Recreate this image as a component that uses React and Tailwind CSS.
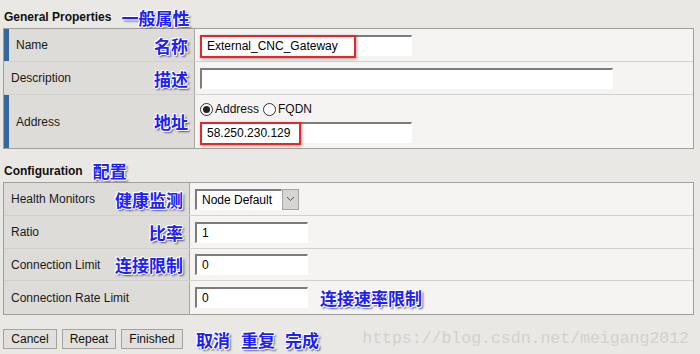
import React from 'react';

const cn = "font-['Noto_Sans_CJK_SC',sans-serif] font-bold text-[17px] leading-none text-[#2020f0] [text-shadow:1px_0_0_#fff,-1px_0_0_#fff,0_1px_0_#fff,0_-1px_0_#fff,1px_1px_0_#fff,-1px_-1px_0_#fff,2px_2px_2px_#555]";
const input = "h-[21px] bg-white border-t-2 border-l-2 border-[#7c7c7c] border-r border-b border-r-white border-b-white px-[5px] text-[12px] text-black flex items-center";

function Row({ label, note, required, height = 'h-[33px]', last, labelW, children }) {
    return (
        <div className={`flex ${height} ${last ? '' : 'border-b border-[#d3d1cd]'}`}>
            <div className={`${labelW} shrink-0 flex items-center justify-between bg-[#dedcd8] border-r border-[#a9a7a3] pl-[7px] pr-[6px] ${required ? 'border-l-[5px] border-l-[#356898]' : ''}`}>
                <span className="text-[12px] text-[#1a1a1a]">{label}</span>
                {note && <span className={cn}>{note}</span>}
            </div>
            <div className="flex-1 bg-[#f5f4f2] pl-[5px] flex flex-col justify-center">
                {children}
            </div>
        </div>
    );
}

function RedBox({ w }) {
    return (
        <div className={`absolute left-0 top-0 ${w} h-[23px] border-2 border-[#e2262c] shadow-[1px_1px_3px_rgba(0,0,0,0.35)]`} />
    );
}

function Radio({ checked }) {
    return (
        <span className="w-[13px] h-[13px] rounded-full border border-[#333] bg-white flex items-center justify-center">
            {checked && <span className="w-[7px] h-[7px] rounded-full bg-[#222]" />}
        </span>
    );
}

export default function App() {
    return (
        <div className="w-[700px] h-[354px] bg-[#eae8e4] font-['Liberation_Sans',Arial,sans-serif] pl-[3px] pr-[6px] overflow-hidden">
            {/* General Properties */}
            <div className="h-[28px] pt-[6px] flex items-center gap-[10px]">
                <span className="text-[12px] font-bold text-[#111] ml-[1px]">General Properties</span>
                <span className={cn}>一般属性</span>
            </div>
            <div className="border border-[#a2a09c]">
                <Row label="Name" note="名称" required labelW="w-[191px]">
                    <div className="relative">
                        <div className={`${input} w-[212px]`}>External_CNC_Gateway</div>
                        <RedBox w="w-[156px]" />
                    </div>
                </Row>
                <Row label="Description" note="描述" labelW="w-[191px]">
                    <div className={`${input} w-[413px]`} />
                </Row>
                <Row label="Address" note="地址" required labelW="w-[191px]" height="h-[53px]" last>
                    <div className="flex items-center gap-[2px] text-[12px] text-[#111]">
                        <Radio checked />
                        <span className="mr-[2px]">Address</span>
                        <Radio />
                        <span>FQDN</span>
                    </div>
                    <div className="relative mt-[4px]">
                        <div className={`${input} w-[212px]`}>58.250.230.129</div>
                        <RedBox w="w-[101px]" />
                    </div>
                </Row>
            </div>

            {/* Configuration */}
            <div className="h-[33px] pt-[10px] flex items-center gap-[10px]">
                <span className="text-[12px] font-bold text-[#111] ml-[1px]">Configuration</span>
                <span className={cn}>配置</span>
            </div>
            <div className="border border-[#a2a09c]">
                <Row label="Health Monitors" note="健康监测" labelW="w-[186px]">
                    <div className="flex">
                        <div className={`${input} w-[87px]`}>Node Default</div>
                        <div className="w-[17px] h-[21px] bg-[#d7d5d1] border border-[#a5a5a5] flex items-center justify-center">
                            <svg width="9" height="6" viewBox="0 0 9 6">
                                <path d="M1 1l3.5 3.5L8 1" fill="none" stroke="#555" strokeWidth="1" />
                            </svg>
                        </div>
                    </div>
                </Row>
                <Row label="Ratio" note="比率" labelW="w-[186px]">
                    <div className={`${input} w-[113px]`}>1</div>
                </Row>
                <Row label="Connection Limit" note="连接限制" labelW="w-[186px]" height="h-[32px]">
                    <div className={`${input} w-[113px]`}>0</div>
                </Row>
                <Row label="Connection Rate Limit" labelW="w-[186px]" last>
                    <div className="flex items-center gap-[12px]">
                        <div className={`${input} w-[113px]`}>0</div>
                        <span className={cn}>连接速率限制</span>
                    </div>
                </Row>
            </div>

            {/* Buttons */}
            <div className="flex items-center mt-[14px]">
                <button className="h-[20px] w-[54px] bg-[#e2e0dc] border border-[#a3a3a3] text-[12px] text-[#111]">Cancel</button>
                <button className="h-[20px] w-[54px] ml-[5px] bg-[#e2e0dc] border border-[#a3a3a3] text-[12px] text-[#111]">Repeat</button>
                <button className="h-[20px] w-[62px] ml-[5px] bg-[#e2e0dc] border border-[#a3a3a3] text-[12px] text-[#111]">Finished</button>
                <span className={`${cn} ml-[13px]`}>取消</span>
                <span className={`${cn} ml-[11px]`}>重复</span>
                <span className={`${cn} ml-[10px]`}>完成</span>
                <span className="ml-auto mr-[5px] font-['Liberation_Mono',monospace] text-[16.5px] leading-none text-[#d3d1cd]">https://blog.csdn.net/meigang2012</span>
            </div>
        </div>
    );
}
